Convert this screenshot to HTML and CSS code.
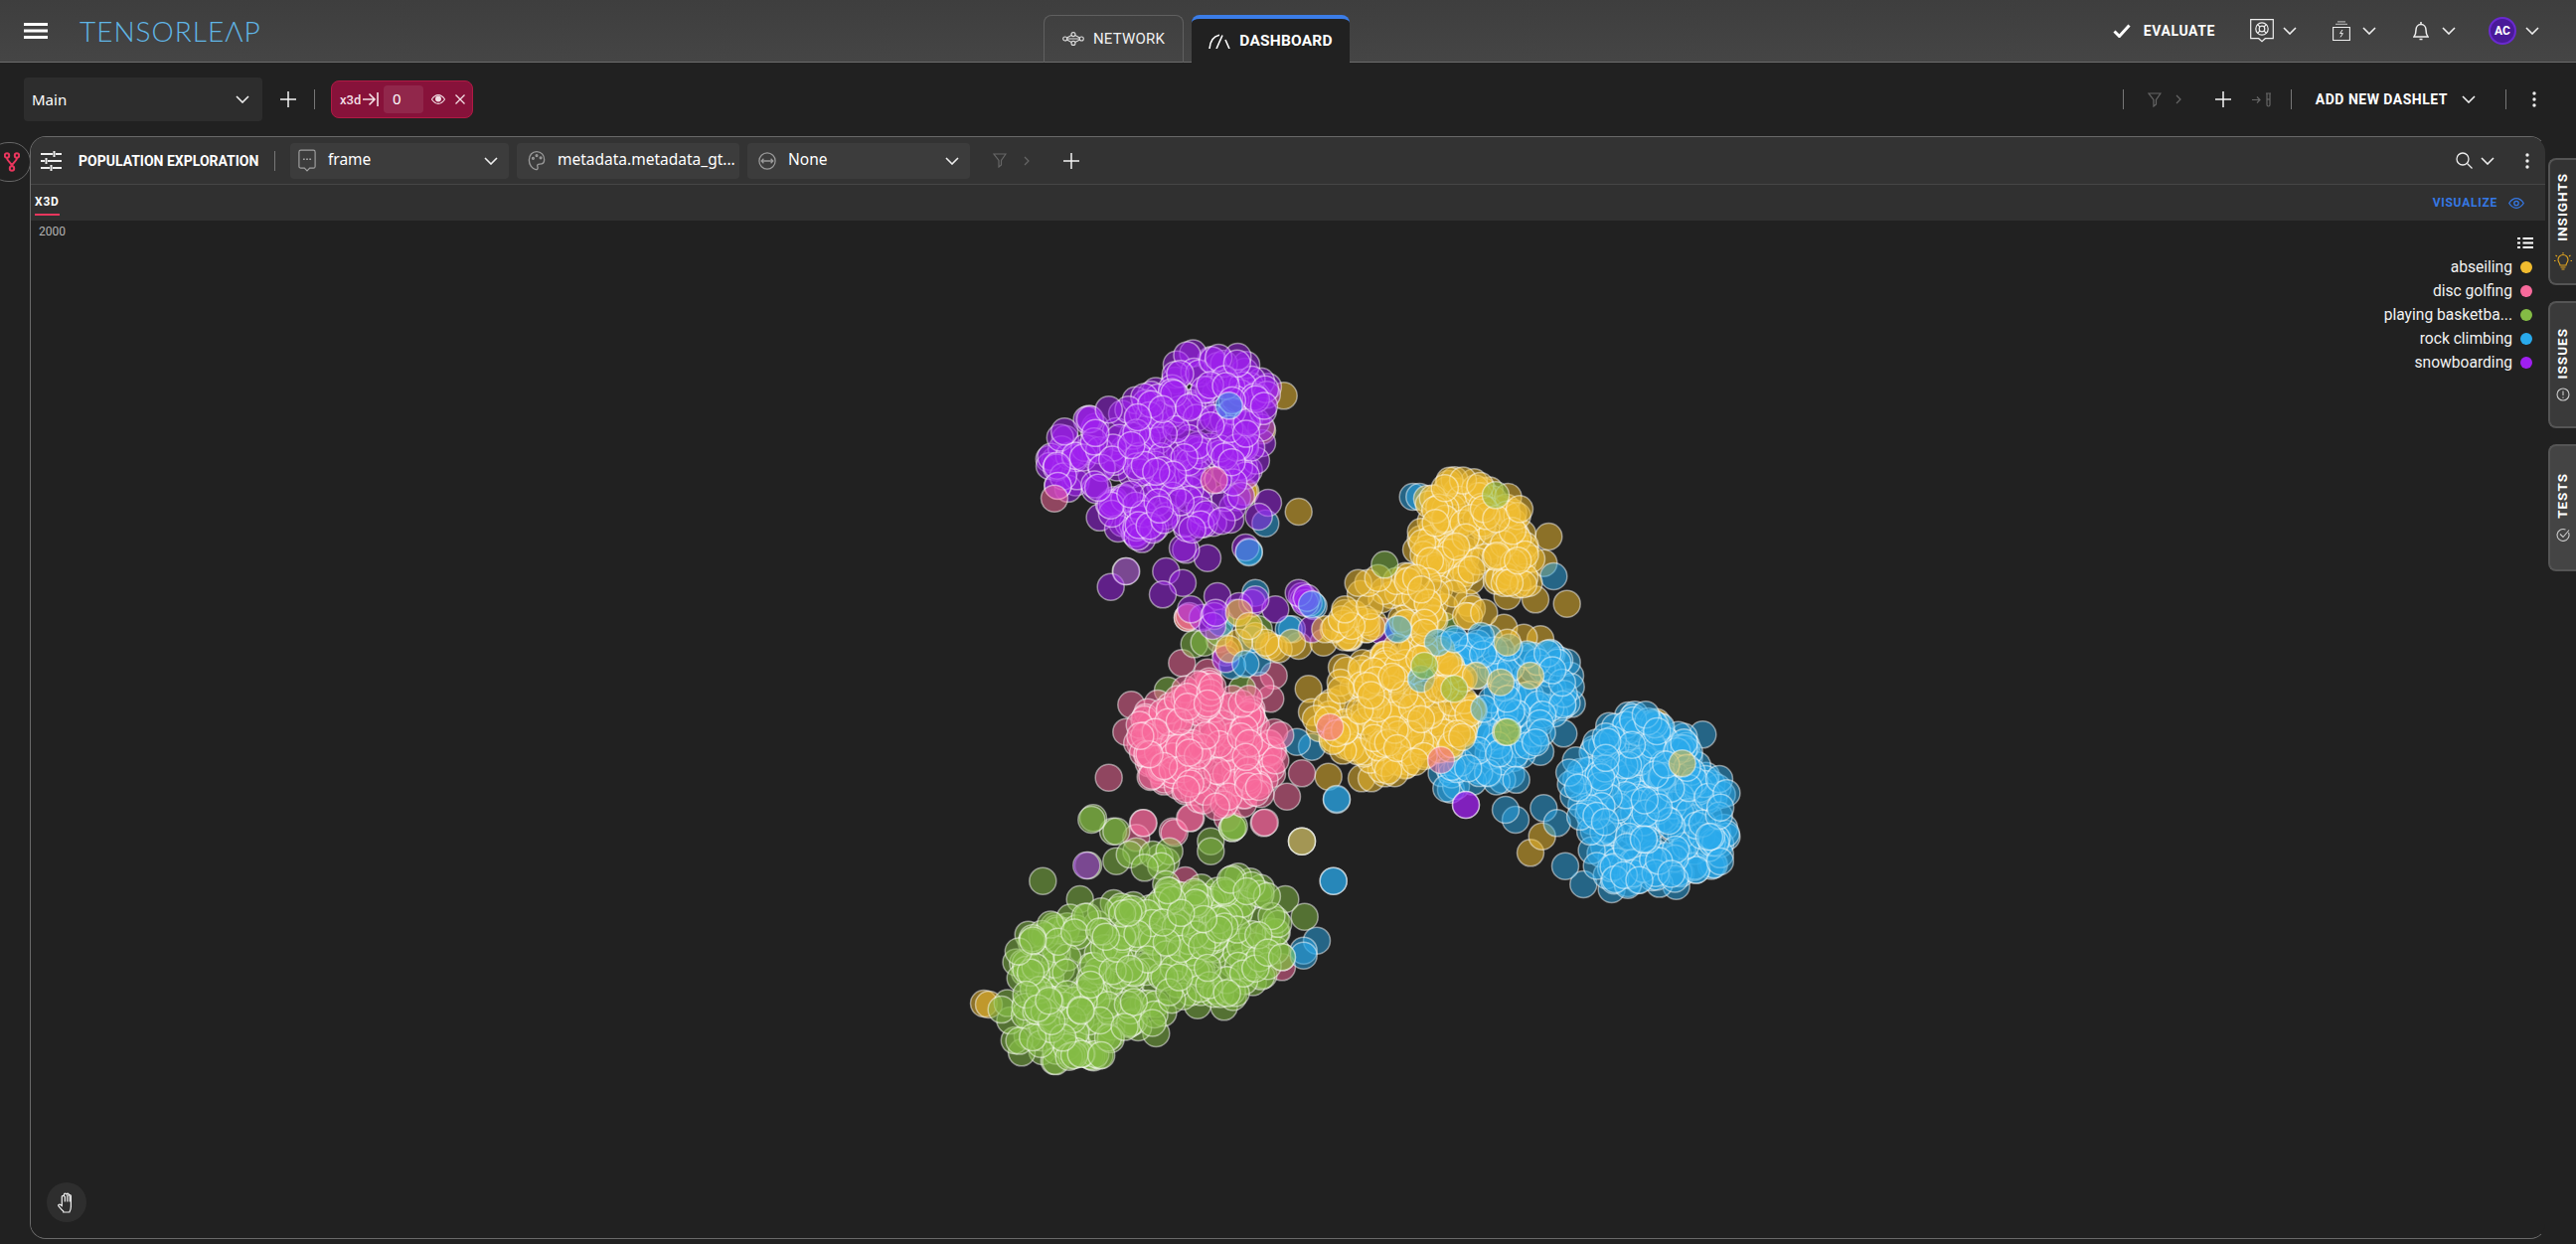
FILE: index.html
```html
<!DOCTYPE html>
<html lang="en">
<head>
<meta charset="utf-8">
<title>Tensorleap</title>
<link rel="stylesheet" href="styles.css">
</head>
<body>
<svg class="defs" width="0" height="0" aria-hidden="true">
  <symbol id="chev" viewBox="0 0 14 8"><path d="M1 1l6 6 6-6" fill="none" stroke="currentColor" stroke-width="1.6"/></symbol>
  <symbol id="plus" viewBox="0 0 16 16"><path d="M8 0v16M0 8h16" fill="none" stroke="currentColor" stroke-width="1.5"/></symbol>
  <symbol id="dots" viewBox="0 0 4 16"><circle cx="2" cy="2" r="1.7" fill="currentColor"/><circle cx="2" cy="8" r="1.7" fill="currentColor"/><circle cx="2" cy="14" r="1.7" fill="currentColor"/></symbol>
  <symbol id="funnel" viewBox="0 0 14 15"><path d="M1 1h12L8.5 7.5V12L6 14V7.5z" fill="none" stroke="currentColor" stroke-width="1.2"/></symbol>
  <symbol id="next" viewBox="0 0 6 10"><path d="M1 1l4 4-4 4" fill="none" stroke="currentColor" stroke-width="1.2"/></symbol>
</svg>
<div class="app">
  <header class="topbar">
    <div class="brand">
      <svg class="burger" viewBox="0 0 24 16"><path d="M0 1.5h24M0 8h24M0 14.5h24" stroke="#fff" stroke-width="3"/></svg>
      <span class="logo">TENSORLEΛP</span>
    </div>
    <nav class="tabs">
      <div class="tab">
        <svg class="ic-net" viewBox="0 0 22 14" fill="none" stroke="#ddd" stroke-width="1.1"><circle cx="2.7" cy="7" r="2"/><circle cx="11" cy="2.6" r="2"/><circle cx="11" cy="11.4" r="2"/><circle cx="19.3" cy="7" r="2"/><path d="M4.7 7h12.6M9.2 3.6L4.5 6M12.8 3.6L17.5 6M9.2 10.4L4.5 8M12.8 10.4L17.5 8"/></svg>
        <span>NETWORK</span>
      </div>
      <div class="tab tab-active">
        <svg class="ic-gauge" viewBox="0 0 22 15" fill="none" stroke="#fff" stroke-width="1.6"><path d="M1 15C1.5 8 5 2.5 11 1.2"/><path d="M8 15l6-13.5"/><path d="M17 6l4 9"/></svg>
        <span>DASHBOARD</span>
      </div>
    </nav>
    <div class="top-actions">
      <div class="evaluate">
        <svg class="ic-check" viewBox="0 0 18 14"><path d="M1.5 7.5l5 5L16.5 1.5" fill="none" stroke="#fff" stroke-width="3"/></svg>
        <span>EVALUATE</span>
      </div>
      <div class="act act-help">
        <svg class="ic-help" viewBox="0 0 24 24" fill="none" stroke="#eee" stroke-width="1.2"><path d="M.7.7h22.6v19h-8l-3.3 3-3.3-3h-8z"/><circle cx="12" cy="10" r="6.2"/><circle cx="12" cy="10" r="2.8"/><path d="M7.6 5.6l2.4 2.4M16.4 5.6L14 8M7.6 14.4l2.4-2.4M16.4 14.4L14 12"/></svg>
        <svg class="chev"><use href="#chev"/></svg>
      </div>
      <div class="act act-power">
        <svg class="ic-power" viewBox="0 0 18 20" fill="none" stroke="#eee"><path d="M.6 6.500h16.800v13H.6z" stroke-width="1.100"/><path d="M5 .8h8M3 3.400h12" stroke-width="1.200" stroke="#aaa"/><path d="M10 9l-2.400 3.600h2.800L8 16.400" stroke-width="1"/></svg>
        <svg class="chev"><use href="#chev"/></svg>
      </div>
      <div class="act act-bell">
        <svg class="ic-bell" viewBox="0 0 16 20" fill="none" stroke="#eee" stroke-width="1.500"><path d="M1 16h14c-1.600-2-2-3.500-2-7 0-3-2-5.500-5-5.500S3 6 3 9c0 3.500-.4 5-2 7z"/><path d="M8 1v2.500M6.500 18.500h3"/></svg>
        <svg class="chev"><use href="#chev"/></svg>
      </div>
      <div class="act act-user">
        <span class="avatar">AC</span>
        <svg class="chev"><use href="#chev"/></svg>
      </div>
    </div>
  </header>

  <section class="toolbar">
    <div class="select select-main"><span>Main</span><svg class="chev"><use href="#chev"/></svg></div>
    <svg class="ic-plus tb-plus"><use href="#plus"/></svg>
    <i class="vsep tb-sep"></i>
    <div class="chip">
      <span class="chip-key">x3d</span>
      <svg class="chip-arrow" viewBox="0 0 16 14" fill="none" stroke="#f3dfe5" stroke-width="1.600"><path d="M0 7h11M6.500 1.500L12 7l-5.500 5.500M15 0v14"/></svg>
      <span class="chip-input">0</span>
      <svg class="chip-eye" viewBox="0 0 16 11"><path d="M.5 5.500C3 1.800 5.500.5 8 .5s5 1.300 7.500 5c-2.500 3.700-5 5-7.500 5S3 9.200.5 5.500z" fill="none" stroke="#f3dfe5" stroke-width="1.200"/><circle cx="8" cy="5" r="3.400" fill="#f3dfe5"/></svg>
      <svg class="chip-x" viewBox="0 0 10 10"><path d="M.5.500l9 9M9.500.5l-9 9" stroke="#f3dfe5" stroke-width="1.300"/></svg>
    </div>
    <div class="tb-right">
      <i class="vsep"></i>
      <svg class="ic-funnel tb-funnel"><use href="#funnel"/></svg>
      <svg class="ic-next tb-next"><use href="#next"/></svg>
      <svg class="ic-plus tb-plus2"><use href="#plus"/></svg>
      <svg class="ic-test" viewBox="0 0 20 15" fill="none" stroke="#666" stroke-width="1.200"><path d="M0 7.500h8M5 4.500l3 3-3 3"/><path d="M14 1h5M15 1v11.500a1.500 1.500 0 003 0V1"/><path d="M15 7h3"/></svg>
      <i class="vsep sep-a"></i>
      <span class="add-dashlet">ADD NEW DASHLET</span>
      <svg class="chev add-chev"><use href="#chev"/></svg>
      <i class="vsep sep-b"></i>
      <svg class="ic-dots"><use href="#dots"/></svg>
    </div>
  </section>

  <main class="panel">
    <div class="panel-head">
      <svg class="ic-sliders" viewBox="0 0 21 20" stroke="#eee" stroke-width="2" fill="none"><path d="M0 3h12M15 3h6M13.500 0v6M0 10h4M7 10h14M5.500 7v6M0 17h9M12 17h9M10.500 14v6M13 17h5"/></svg>
      <span class="panel-title">POPULATION EXPLORATION</span>
      <i class="vsep head-sep"></i>
      <div class="select select-field select-frame">
        <svg class="field-ic" viewBox="0 0 20 26" fill="none" stroke="#a0a0a0" stroke-width="1.300"><path d="M3 1h14a2 2 0 012 2v16a2 2 0 01-2 2h-4l-3 3-3-3H3a2 2 0 01-2-2V3a2 2 0 012-2z"/><path d="M5.500 11h2M9 11h2M12.500 11h2" stroke-width="1.600"/></svg>
        <span>frame</span><svg class="chev"><use href="#chev"/></svg>
      </div>
      <div class="select select-field">
        <svg class="field-ic" viewBox="0 0 20 24" fill="none" stroke="#999" stroke-width="1.500"><path d="M10 1.500c5 0 8.500 4 8.500 9 0 4-3 5-5 5-2 0-3.500.5-2.500 3 .8 2-.5 3.500-2 3-4-1-7.500-5-7.500-10.500s3.500-9.500 8.500-9.500z"/><circle cx="6" cy="9" r="1"/><circle cx="10" cy="6" r="1"/><circle cx="14.500" cy="8.500" r="1"/></svg>
        <span>metadata.metadata_gt...</span>
      </div>
      <div class="select select-field">
        <svg class="field-ic" viewBox="0 0 20 24" fill="none" stroke="#999" stroke-width="1.400"><circle cx="10" cy="12" r="9"/><path d="M3.500 12h13M6 9.500L3.500 12 6 14.500M14 9.500l2.500 2.500-2.500 2.500"/></svg>
        <span>None</span><svg class="chev"><use href="#chev"/></svg>
      </div>
      <svg class="ic-funnel head-funnel"><use href="#funnel"/></svg>
      <svg class="ic-next head-next"><use href="#next"/></svg>
      <svg class="ic-plus head-plus"><use href="#plus"/></svg>
      <div class="head-right">
        <svg class="ic-search" viewBox="0 0 17 17" fill="none" stroke="#eee" stroke-width="1.300"><circle cx="7" cy="7" r="6"/><path d="M11.500 11.500L16.500 16.500"/></svg>
        <svg class="chev"><use href="#chev"/></svg>
        <svg class="ic-dots head-dots"><use href="#dots"/></svg>
      </div>
    </div>
    <div class="panel-sub">
      <span class="subtab">X3D</span>
      <div class="visualize">
        <span>VISUALIZE</span>
        <svg class="ic-eye" viewBox="0 0 16 11" fill="none" stroke="#3578e5" stroke-width="1.300"><path d="M.7 5.500C3 2 5.500.7 8 .7s5 1.300 7.300 4.800C13 9 10.500 10.300 8 10.300S3 9 .7 5.500z"/><circle cx="8" cy="5.500" r="2.200"/></svg>
      </div>
    </div>
    <div class="chart">
      <svg id="scatter" class="scatter" viewBox="31 222 2531 1024" preserveAspectRatio="xMinYMin"></svg>
      <span class="axis-label">2000</span>
      <div class="legend">
        <svg class="ic-list" viewBox="0 0 16 13" stroke="#fff" stroke-width="2"><path d="M0 2h3M5.500 2H16M0 6.500h3M5.500 6.500H16M0 11h3M5.500 11H16"/></svg>
        <div class="legend-item"><span>abseiling</span><i class="dot dot-y"></i></div>
        <div class="legend-item"><span>disc golfing</span><i class="dot dot-k"></i></div>
        <div class="legend-item"><span>playing basketba...</span><i class="dot dot-g"></i></div>
        <div class="legend-item"><span>rock climbing</span><i class="dot dot-b"></i></div>
        <div class="legend-item"><span>snowboarding</span><i class="dot dot-p"></i></div>
      </div>
      <div class="hand">
        <svg viewBox="0 0 20 22" fill="none" stroke="#eee" stroke-width="1.300"><path d="M6 20c-1.500-1-2.500-2.500-5-5.500-.8-1 .5-2.500 2-1.500l1.500 1.200V4.500c0-1.500 2-1.500 2.200 0V2.500c0-1.800 2.400-1.800 2.600 0v-.3c.2-1.500 2.400-1.500 2.500 0v1.600c.2-1.400 2.200-1.400 2.300 0V15c0 3-1 5-1.600 6H6z"/><path d="M7.700 4v6M10.300 2.500V10M12.800 3.500V10"/></svg>
      </div>
    </div>
  </main>

  <div class="node-tab">
    <svg viewBox="0 0 16 20" fill="none" stroke="#e8365d" stroke-width="2"><circle cx="3" cy="3.500" r="2.200"/><circle cx="13" cy="3.500" r="2.200"/><circle cx="8" cy="16.500" r="2.200"/><path d="M3 6c0 4 5 4 5 8.500M13 6c0 4-5 4-5 8.500"/></svg>
  </div>

  <aside class="side-tabs">
    <div class="side-tab side-insights">
      <span>INSIGHTS</span>
      <svg viewBox="0 0 18 18" fill="none" stroke="#e6a820" stroke-width="1.100"><path d="M6 13c0-2-2-3-2-5.500a5 5 0 0110 0C14 10 12 11 12 13zM6.500 15h5M7.500 17h3M9 0v1.500M1.500 3L3 4M16.500 3L15 4M0 8.500h1.500M16.500 8.500H18"/></svg>
    </div>
    <div class="side-tab side-issues">
      <span>ISSUES</span>
      <svg viewBox="0 0 14 14" fill="none" stroke="#ccc" stroke-width="1.100"><circle cx="7" cy="7" r="6"/><path d="M7 3.500v4.500M7 9.500v1.200"/></svg>
    </div>
    <div class="side-tab side-tests">
      <span>TESTS</span>
      <svg viewBox="0 0 14 14" fill="none" stroke="#ccc" stroke-width="1.100"><path d="M12.500 5a6 6 0 11-3-3"/><path d="M4 6.500l3 3 6-7"/></svg>
    </div>
  </aside>
</div>
<script src="script.js"></script>
</body>
</html>
```
FILE: styles.css
```css
* { box-sizing: border-box; }
html, body { margin: 0; height: 100%; background: #212121; overflow: hidden; }
body { font-family: Roboto, "Liberation Sans", sans-serif; color: #fff; }
.defs { position: absolute; }
.app { position: relative; width: 2592px; height: 1252px; display: flex; flex-direction: column; }
svg { display: block; flex: none; }
.chev { width: 14px; height: 8px; color: #eee; }

/* top bar */
.topbar { height: 63px; flex: none; display: flex; align-items: flex-end; background: linear-gradient(#3e3e3e, #454545); border-bottom: 1px solid #6b6b6b; }
.brand { width: 1050px; height: 62px; display: flex; align-items: center; padding-left: 24px; }
.burger { width: 24px; height: 16px; }
.logo { margin-left: 32px; font-family: Lato, sans-serif; font-weight: 300; font-size: 28px; letter-spacing: 1px; color: #60b6e6; }
.tabs { display: flex; gap: 8px; margin-bottom: -1px; }
.tab { width: 141px; height: 48px; display: flex; align-items: center; justify-content: center; gap: 9px; padding-bottom: 2px; border: 1px solid #606060; border-bottom: 0; border-radius: 8px 8px 0 0; font-size: 15px; letter-spacing: .2px; color: #f0f0f0; }
.tab-active { width: 159px; background: #212121; border: 0; border-top: 4px solid #3b7de8; font-weight: 700; font-size: 15.500px; color: #fff; padding-bottom: 0; }
.ic-net { width: 22px; height: 14px; }
.ic-gauge { width: 22px; height: 15px; }
.top-actions { margin-left: auto; height: 62px; display: flex; align-items: center; padding-right: 37px; }
.evaluate { display: flex; align-items: center; gap: 13px; font-size: 14px; font-weight: 700; letter-spacing: .6px; }
.ic-check { width: 18px; height: 14px; }
.act { display: flex; align-items: center; }
.act-help { margin-left: 35px; gap: 9px; }
.ic-help { width: 24px; height: 24px; }
.act-power { margin-left: 36px; gap: 12px; }
.ic-power { width: 18px; height: 20px; }
.act-bell { margin-left: 37px; gap: 13px; }
.ic-bell { width: 16px; height: 20px; }
.act-user { margin-left: 33px; gap: 9px; }
.avatar { width: 28px; height: 28px; border-radius: 50%; background: #4a1a99; border: 2px solid #6a2ad0; display: flex; align-items: center; justify-content: center; font-size: 12px; font-weight: 700; }

/* toolbar */
.toolbar { height: 74px; flex: none; display: flex; align-items: center; padding: 0 40px 0 24px; }
.select { display: flex; align-items: center; border-radius: 4px; font-family: "Noto Sans", sans-serif; }
.select-main { width: 240px; height: 44px; background: #2d2d2d; padding: 0 13px 0 8px; justify-content: space-between; font-size: 15px; }
.ic-plus { width: 16px; height: 16px; color: #f5f5f5; }
.tb-plus { margin-left: 18px; }
.vsep { display: block; flex: none; width: 1px; height: 20px; background: #777; }
.tb-sep { margin-left: 18px; }
.chip { margin-left: 16px; width: 143px; height: 38px; background: #87123a; border: 1px solid #b01a45; border-radius: 8px; display: flex; align-items: center; padding-left: 8px; }
.chip-key { font-size: 13px; font-weight: 500; color: #f3dfe5; width: 22px; }
.chip-arrow { width: 16px; height: 14px; margin-left: 1px; }
.chip-input { margin-left: 5px; width: 40px; height: 28px; background: rgba(255,255,255,.09); border-radius: 4px; padding-left: 9px; font-family: "Noto Sans", sans-serif; font-size: 15px; line-height: 27px; }
.chip-eye { width: 14px; height: 10px; margin-left: 8px; }
.chip-x { width: 10px; height: 10px; margin-left: 10px; }
.tb-right { margin-left: auto; display: flex; align-items: center; }
.ic-funnel { width: 14px; height: 15px; color: #666; }
.tb-funnel { margin-left: 24px; }
.ic-next { width: 6px; height: 10px; color: #666; }
.tb-next { margin-left: 14px; }
.tb-plus2 { margin-left: 34px; }
.ic-test { width: 20px; height: 15px; margin-left: 21px; }
.sep-a { margin-left: 19px; }
.add-dashlet { margin-left: 24px; font-size: 14px; font-weight: 700; letter-spacing: .5px; white-space: nowrap; }
.add-chev { margin-left: 14px; }
.sep-b { margin-left: 30px; }
.ic-dots { width: 4px; height: 16px; color: #eee; margin-left: 26px; }

/* panel */
.panel { flex: none; margin-left: 30px; width: 2532px; height: 1110px; background: #212121; border: 1px solid #6a6a6a; border-right-color: transparent; border-radius: 16px; overflow: hidden; display: flex; flex-direction: column; }
.panel-head { height: 48px; flex: none; background: #333; border-bottom: 1px solid #464646; display: flex; align-items: center; padding-left: 10px; }
.ic-sliders { width: 21px; height: 20px; }
.panel-title { margin-left: 17px; width: 182px; font-size: 14px; font-weight: 700; white-space: nowrap; }
.head-sep { margin-left: 15px; }
.select-field { width: 224px; height: 36px; background: #3c3c3c; margin-left: 8px; padding: 0 11px; font-size: 15.500px; }
.select-frame { width: 220px; margin-left: 15px; padding-left: 8px; }
.select-field span { flex: 1; margin-left: 12px; white-space: nowrap; padding-bottom: 3px; }
.field-ic { width: 18px; height: 24px; }
.head-funnel { margin-left: 23px; }
.head-next { margin-left: 17px; }
.head-plus { margin-left: 34px; }
.head-right { margin-left: auto; display: flex; align-items: center; padding-right: 16px; }
.ic-search { width: 17px; height: 17px; }
.head-right .chev { margin-left: 8px; }
.head-dots { margin-left: 31px; }
.panel-sub { height: 36px; flex: none; background: #303030; display: flex; align-items: center; justify-content: space-between; padding: 0 21px 0 4px; }
.subtab { font-size: 12px; font-weight: 700; letter-spacing: .8px; height: 26px; line-height: 25px; border-bottom: 2px solid #e8365d; }
.visualize { display: flex; align-items: center; gap: 11px; color: #3578e5; font-size: 12px; font-weight: 700; letter-spacing: .75px; }
.ic-eye { width: 16px; height: 11px; }
.chart { position: relative; flex: 1; background: #212121; }
.scatter { position: absolute; left: 0; top: 0; width: 2531px; height: 1024px; }
.pt { stroke: rgba(255,255,255,.48); stroke-width: 1.500; }
.pt-y { fill: rgba(240,187,47,.52); }
.pt-k { fill: rgba(247,106,155,.52); }
.pt-g { fill: rgba(132,188,69,.52); }
.pt-b { fill: rgba(41,170,236,.5); }
.pt-p { fill: rgba(160,32,240,.5); }
.axis-label { position: absolute; left: 8px; top: 4px; font-size: 12px; color: #b5b5b5; }
.legend { position: absolute; right: 12px; top: 16px; display: flex; flex-direction: column; align-items: flex-end; }
.ic-list { width: 16px; height: 13px; margin-bottom: 6px; }
.legend-item { height: 24px; display: flex; align-items: center; gap: 8px; font-size: 15.600px; color: #f2f2f2; }
.dot { display: block; width: 12px; height: 12px; border-radius: 50%; margin-right: 1px; }
.dot-y { background: #f0bb2f; }
.dot-k { background: #f76a9b; }
.dot-g { background: #84bc45; }
.dot-b { background: #29aaec; }
.dot-p { background: #9f1ff0; }
.hand { position: absolute; left: 16px; bottom: 16px; width: 40px; height: 40px; border-radius: 50%; background: #2e2e2e; display: flex; align-items: center; justify-content: center; }
.hand svg { width: 19px; height: 21px; }

/* overlays */
.node-tab { position: absolute; left: -12px; top: 143px; width: 43px; height: 40px; border: 1px solid #666; border-radius: 20px; background: #212121; display: flex; align-items: center; justify-content: flex-end; padding-right: 10px; }
.node-tab svg { width: 16px; height: 20px; }
.side-tabs { position: absolute; right: 0; top: 159px; display: flex; flex-direction: column; gap: 16px; }
.side-tab { width: 28px; height: 128px; border: 2px solid #555; border-right: 0; border-radius: 8px 0 0 8px; display: flex; flex-direction: column; align-items: center; justify-content: flex-end; gap: 9px; padding-bottom: 15px; font-size: 13.500px; font-weight: 700; letter-spacing: 1px; }
.side-tab span { writing-mode: vertical-rl; transform: rotate(180deg); line-height: 1; }
.side-tab svg { width: 14px; height: 14px; }
.side-insights { background: #333; padding-bottom: 13px; gap: 11px; }
.side-insights svg { width: 18px; height: 18px; }
.side-issues { background: #3a3a3a; padding-bottom: 25px; }
.side-tests { background: #444; padding-bottom: 28px; }
```
FILE: script.js
```js
(function () {
  var seed = 20240611;
  function rnd() {
    seed |= 0; seed = seed + 0x6D2B79F5 | 0;
    var t = Math.imul(seed ^ seed >>> 15, 1 | seed);
    t = t + Math.imul(t ^ t >>> 7, 61 | t) ^ t;
    return ((t ^ t >>> 14) >>> 0) / 4294967296;
  }
  function conv(o, pts) {
    return pts.map(function (p) { return [o[0] + p[0] / 3, o[1] + p[1] / 3]; });
  }
  function inside(p, poly) {
    var c = false;
    for (var i = 0, j = poly.length - 1; i < poly.length; j = i++) {
      var a = poly[i], b = poly[j];
      if ((a[1] > p[1]) !== (b[1] > p[1]) && p[0] < (b[0] - a[0]) * (p[1] - a[1]) / (b[1] - a[1]) + a[0]) c = !c;
    }
    return c;
  }
  var Z5 = [1000, 320], Z7 = [1100, 450], Z8 = [1300, 600], Z9 = [960, 780];
  var out = [];
  function add(cls, o, pts) {
    conv(o, pts).forEach(function (p) { out.push([p[0], p[1], cls]); });
  }
  function blob(cls, o, poly, n) {
    var P = conv(o, poly), x0 = 1e9, x1 = -1e9, y0 = 1e9, y1 = -1e9;
    P.forEach(function (p) { x0 = Math.min(x0, p[0]); x1 = Math.max(x1, p[0]); y0 = Math.min(y0, p[1]); y1 = Math.max(y1, p[1]); });
    var made = 0;
    while (made < n) {
      var q = [x0 + rnd() * (x1 - x0), y0 + rnd() * (y1 - y0)];
      if (inside(q, P)) { out.push([q[0], q[1], cls]); made++; }
    }
  }

  // sparse outliers, drawn first
  add('y', Z7, [[620,195],[1430,473],[1375,270],[1335,460],[1250,450],[1360,350],[650,730],[710,995],[285,515],[1030,470],[950,470],[1130,470],[1240,545],[1350,580],[1300,575],[750,665],[720,770],[810,1000],[840,1000],[880,985],[660,800],[620,600],[695,590],[775,575],[460,135],[975,310],[1040,350]]);
  add('y', Z5, [[875,235],[755,525],[810,340]]);
  add('y', Z9, [[90,690],[105,693],[1050,200]]);
  add('y', Z8, [[720,775],[755,725],[1100,380]]);
  add('k', Z7, [[268,652],[115,778],[100,860],[545,690],[535,760],[505,720],[345,680],[47,998],[630,985],[585,1055],[515,1135],[150,1135],[240,1160],[295,1120],[405,1120],[130,1180],[630,1190],[285,515],[290,510],[380,580],[400,620]]);
  add('k', Z9, [[572,145],[665,175],[712,130],[938,143],[698,318],[935,490],[990,580]]);
  add('g', Z7, [[305,595],[335,590],[225,735],[450,730],[420,1150],[355,1190],[60,1160],[0,1120],[1060,540],[98,375],[430,500],[470,550],[500,550],[380,560]]);
  add('g', Z9, [[268,320],[380,375],[415,135],[490,170],[640,260],[620,250],[550,230],[490,260],[775,230],[840,160],[845,155],[1000,375],[1058,428],[610,780],[405,273],[815,700],[735,695],[990,550],[1050,200],[530,240],[600,240],[650,230],[625,275],[640,330],[575,280]]);
  add('b', Z7, [[490,440],[665,480],[920,550],[470,315],[520,230],[600,550],[590,550],[385,530],[735,1065],[660,905],[615,890],[1390,390],[965,150],[985,150],[495,650],[480,580],[420,660]]);
  add('b', Z8, [[135,612],[125,860],[760,640],[675,675],[645,645],[800,685],[880,870],[825,815],[965,885],[1160,875],[1240,418],[1015,360],[820,415],[750,470],[845,325],[840,240],[830,200]]);
  add('b', Z9, [[1145,320],[1095,500],[1055,530],[1055,545]]);
  add('p', Z5, [[353,812],[520,765],[645,725],[580,700],[570,800],[510,835],[760,693],[828,558],[800,600],[810,378],[770,460],[400,765],[570,695]]);
  add('p', Z7, [[375,450],[480,470],[550,490],[630,450],[635,460],[650,470],[660,550],[870,555],[330,515],[400,640],[295,490],[365,510],[640,470],[440,480],[490,460],[360,540],[370,500],[620,440],[645,455]]);
  add('p', Z9, [[400,273]]);

  // dense groups
  blob('p', Z5, [[600,95],[730,95],[800,160],[845,235],[810,330],[795,450],[730,610],[480,680],[390,650],[285,580],[190,510],[155,440],[210,340],[320,275],[380,225],[500,195],[550,125]], 265);
  blob('b', Z7, [[1050,590],[1170,570],[1270,590],[1400,620],[1445,700],[1440,790],[1350,880],[1280,1010],[1100,1040],[1000,1020],[1110,920],[1180,800],[1100,650]], 120);
  blob('y', Z7, [[1080,85],[1210,105],[1295,190],[1305,300],[1345,370],[1305,425],[1200,405],[1080,405],[1005,345],[965,310],[995,230],[1005,130]], 135);
  blob('y', Z7, [[880,370],[1000,390],[1170,490],[1080,560],[920,540],[780,590],[720,560],[770,450]], 44);
  blob('y', Z7, [[820,625],[900,595],[1060,600],[1120,700],[1160,830],[1090,905],[1000,955],[880,995],[755,925],[665,830],[715,760],[755,680]], 195);
  add('y', Z7, [[545,605],[530,600],[560,610],[490,570],[520,590],[440,500],[440,590],[410,610],[470,540],[600,590],[725,550],[700,550],[730,545],[750,520],[780,540],[760,490],[835,480],[830,410],[800,410],[860,395],[950,405],[975,395],[990,430],[1180,500],[1000,530],[1000,560]]);
  blob('b', Z8, [[1010,355],[1070,355],[1130,405],[1240,425],[1255,490],[1340,570],[1330,700],[1315,795],[1160,865],[1040,880],[960,865],[885,775],[865,630],[805,540],[875,475],[955,380]], 280);
  blob('k', Z7, [[340,695],[450,775],[535,805],[565,880],[545,995],[485,1075],[380,1095],[285,1055],[185,1015],[105,900],[165,785],[260,735]], 205);
  blob('g', Z9, [[540,355],[640,345],[790,335],[850,285],[925,340],[965,380],[985,480],[1005,550],[925,625],[820,685],[740,655],[650,705],[600,775],[500,815],[410,885],[280,865],[205,845],[165,785],[135,700],[205,640],[185,570],[195,490],[255,455],[340,445],[355,395],[430,415],[470,375]], 385);

  // individual points that sit on top
  add('g', Z7, [[880,355],[1215,145]]);
  add('k', Z7, [[715,845],[565,870],[1050,945],[470,760]]);
  add('p', Z7, [[1125,1080],[1125,1080]]);
  add('b', Z7, [[460,655],[920,550],[660,475],[1040,590],[1090,580],[1170,570],[990,700],[1180,790],[1250,760]]);
  add('b', Z5, [[710,265],[770,708]]);
  add('k', Z5, [[665,490],[183,545]]);
  add('y', Z8, [[1178,505]]);
  add('y', Z7, [[1245,860],[1320,690],[1155,690],[1230,710],[1250,590],[985,640],[1040,730]]);
  add('g', Z7, [[1000,660],[1090,730],[1250,860]]);
  add('g', Z9, [[990,550]]);

  var svg = document.getElementById('scatter');
  var NS = 'http://www.w3.org/2000/svg';
  out.forEach(function (p) {
    var c = document.createElementNS(NS, 'circle');
    c.setAttribute('cx', p[0].toFixed(1));
    c.setAttribute('cy', p[1].toFixed(1));
    c.setAttribute('r', '13.5');
    c.setAttribute('class', 'pt pt-' + p[2]);
    svg.appendChild(c);
  });
})();
```
